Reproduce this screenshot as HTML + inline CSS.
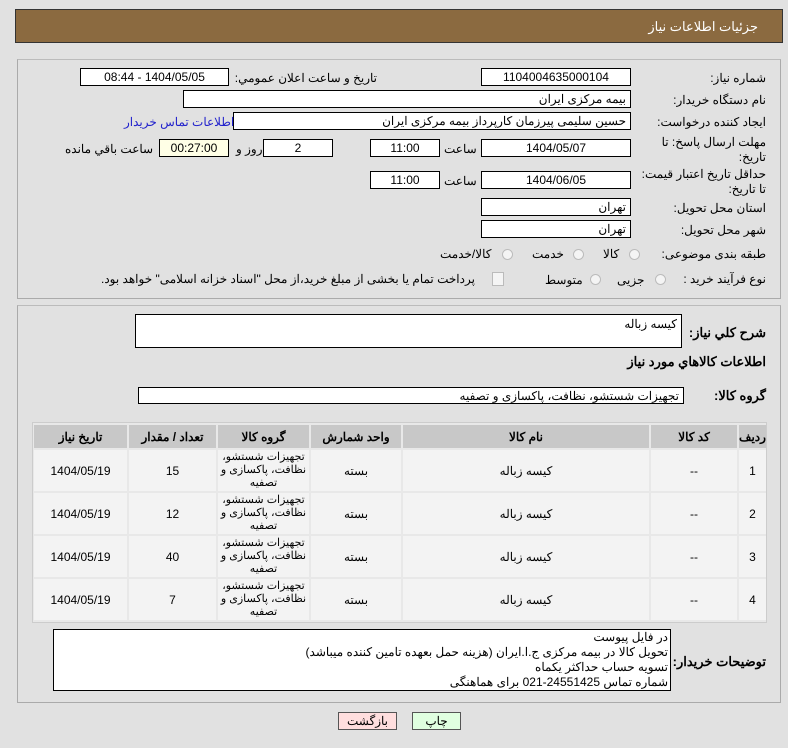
<!DOCTYPE html>
<html><head><meta charset="utf-8"><style>
body{margin:0;width:788px;height:748px;background:#e1e1e1;font-family:Tahoma,"Liberation Sans","Noto Sans CJK SC",sans-serif;font-size:12px;color:#000;position:relative;overflow:hidden;direction:rtl}
.a{position:absolute;white-space:nowrap}
.box{position:absolute;background:#fff;border:1px solid #000;box-sizing:border-box;font-size:12px;text-align:center;line-height:16px}
.r{text-align:right;padding-right:4px}
.lbl{position:absolute;white-space:nowrap;text-align:right}
.panel{position:absolute;left:17px;width:764px;border:1px solid #aaa;border-top-color:#bbb;box-sizing:border-box;background:#e1e1e1}
.rad{position:absolute;width:11px;height:11px;border-radius:50%;border:1px solid #bbb;background:#f4f4f4;box-sizing:border-box}
.cell{position:absolute;box-sizing:border-box;display:flex;align-items:center;justify-content:center;text-align:center;font-size:12px;line-height:14px;overflow:hidden}
.h{background:#c8c8c8;font-weight:bold;top:425px;height:23px}
.d{background:#f3f3f3;height:41px}
</style></head><body>
<div class="a" style="left:15px;top:9px;width:768px;height:34px;background:#8b6a40;border:1px solid #333;box-sizing:border-box"></div>
<div class="a" style="right:30px;top:19px;color:#fff;font-size:13px">جزئیات اطلاعات نیاز</div>

<div class="panel" style="top:59px;height:240px"></div>
<div class="lbl" style="right:22px;top:71px">شماره نیاز:</div>
<div class="box" style="left:481px;top:68px;width:150px;height:18px">1104004635000104</div>
<div class="lbl" style="right:411px;top:71px">تاریخ و ساعت اعلان عمومي:</div>
<div class="box" style="left:80px;top:68px;width:149px;height:18px">1404/05/05 - 08:44</div>

<div class="lbl" style="right:22px;top:93px">نام دستگاه خریدار:</div>
<div class="box r" style="left:183px;top:90px;width:448px;height:18px">بیمه مرکزی ایران</div>

<div class="lbl" style="right:22px;top:115px">ایجاد کننده درخواست:</div>
<div class="box r" style="left:233px;top:112px;width:398px;height:18px">حسین سلیمی پیرزمان کارپرداز بیمه مرکزی ایران</div>
<div class="lbl" style="left:124px;top:115px;color:#2222cc">اطلاعات تماس خریدار</div>

<div class="lbl" style="right:22px;top:135px;line-height:15px">مهلت ارسال پاسخ: تا<br>تاریخ:</div>
<div class="box" style="left:481px;top:139px;width:150px;height:18px">1404/05/07</div>
<div class="lbl" style="left:444px;top:142px">ساعت</div>
<div class="box" style="left:370px;top:139px;width:70px;height:18px">11:00</div>
<div class="box" style="left:263px;top:139px;width:70px;height:18px">2</div>
<div class="lbl" style="left:236px;top:142px">روز و</div>
<div class="box" style="left:159px;top:139px;width:70px;height:18px;background:#ffffe6">00:27:00</div>
<div class="lbl" style="left:65px;top:142px">ساعت باقي مانده</div>

<div class="lbl" style="right:22px;top:167px;line-height:15px">حداقل تاریخ اعتبار قیمت:<br>تا تاریخ:</div>
<div class="box" style="left:481px;top:171px;width:150px;height:18px">1404/06/05</div>
<div class="lbl" style="left:444px;top:174px">ساعت</div>
<div class="box" style="left:370px;top:171px;width:70px;height:18px">11:00</div>

<div class="lbl" style="right:22px;top:201px">استان محل تحویل:</div>
<div class="box r" style="left:481px;top:198px;width:150px;height:18px">تهران</div>
<div class="lbl" style="right:22px;top:223px">شهر محل تحویل:</div>
<div class="box r" style="left:481px;top:220px;width:150px;height:18px">تهران</div>

<div class="lbl" style="right:22px;top:247px">طبقه بندی موضوعی:</div>
<div class="rad" style="left:629px;top:249px"></div><div class="lbl" style="left:603px;top:247px">کالا</div>
<div class="rad" style="left:573px;top:249px"></div><div class="lbl" style="left:532px;top:247px">خدمت</div>
<div class="rad" style="left:502px;top:249px"></div><div class="lbl" style="left:440px;top:247px">کالا/خدمت</div>

<div class="lbl" style="right:22px;top:272px">نوع فرآیند خرید :</div>
<div class="rad" style="left:655px;top:274px"></div><div class="lbl" style="left:617px;top:273px">جزیی</div>
<div class="rad" style="left:590px;top:274px"></div><div class="lbl" style="left:545px;top:273px">متوسط</div>
<div class="a" style="left:492px;top:272px;width:10px;height:12px;border:1px solid #bbb;background:#f4f4f4"></div>
<div class="lbl" style="left:101px;top:272px">پرداخت تمام یا بخشی از مبلغ خرید،از محل "اسناد خزانه اسلامی" خواهد بود.</div>

<div class="panel" style="top:305px;height:398px"></div>
<div class="lbl" style="right:22px;top:325px;font-weight:bold;font-size:13px">شرح کلي نياز:</div>
<div class="box r" style="left:135px;top:314px;width:547px;height:34px;text-align:right;line-height:18px">کیسه زباله</div>
<div class="lbl" style="right:22px;top:354px;font-weight:bold;font-size:13px">اطلاعات کالاهاي مورد نياز</div>
<div class="lbl" style="right:22px;top:388px;font-weight:bold;font-size:13px">گروه کالا:</div>
<div class="box r" style="left:138px;top:387px;width:546px;height:17px">تجهیزات شستشو، نظافت، پاکسازی و تصفیه</div>

<div class="a" style="left:32px;top:422px;width:735px;height:201px;background:#e8e8e8;border:1px solid #ccc;box-sizing:border-box"></div>
<div class="cell h" style="left:739px;width:27px">ردیف</div>
<div class="cell h" style="left:651px;width:86px">کد کالا</div>
<div class="cell h" style="left:403px;width:246px">نام کالا</div>
<div class="cell h" style="left:311px;width:90px">واحد شمارش</div>
<div class="cell h" style="left:218px;width:91px">گروه کالا</div>
<div class="cell h" style="left:129px;width:87px">تعداد / مقدار</div>
<div class="cell h" style="left:34px;width:93px">تاریخ نیاز</div>

<div class="cell d" style="top:450px;left:739px;width:27px">1</div><div class="cell d" style="top:450px;left:651px;width:86px">--</div><div class="cell d" style="top:450px;left:403px;width:246px">کیسه زباله</div><div class="cell d" style="top:450px;left:311px;width:90px">بسته</div><div class="cell d" style="top:450px;left:218px;width:91px;font-size:11px;line-height:13px">تجهیزات شستشو،<br>نظافت، پاکسازی و<br>تصفیه</div><div class="cell d" style="top:450px;left:129px;width:87px">15</div><div class="cell d" style="top:450px;left:34px;width:93px">1404/05/19</div>

<div class="cell d" style="top:493px;left:739px;width:27px">2</div><div class="cell d" style="top:493px;left:651px;width:86px">--</div><div class="cell d" style="top:493px;left:403px;width:246px">کیسه زباله</div><div class="cell d" style="top:493px;left:311px;width:90px">بسته</div><div class="cell d" style="top:493px;left:218px;width:91px;font-size:11px;line-height:13px">تجهیزات شستشو،<br>نظافت، پاکسازی و<br>تصفیه</div><div class="cell d" style="top:493px;left:129px;width:87px">12</div><div class="cell d" style="top:493px;left:34px;width:93px">1404/05/19</div>

<div class="cell d" style="top:536px;left:739px;width:27px">3</div><div class="cell d" style="top:536px;left:651px;width:86px">--</div><div class="cell d" style="top:536px;left:403px;width:246px">کیسه زباله</div><div class="cell d" style="top:536px;left:311px;width:90px">بسته</div><div class="cell d" style="top:536px;left:218px;width:91px;font-size:11px;line-height:13px">تجهیزات شستشو،<br>نظافت، پاکسازی و<br>تصفیه</div><div class="cell d" style="top:536px;left:129px;width:87px">40</div><div class="cell d" style="top:536px;left:34px;width:93px">1404/05/19</div>

<div class="cell d" style="top:579px;left:739px;width:27px">4</div><div class="cell d" style="top:579px;left:651px;width:86px">--</div><div class="cell d" style="top:579px;left:403px;width:246px">کیسه زباله</div><div class="cell d" style="top:579px;left:311px;width:90px">بسته</div><div class="cell d" style="top:579px;left:218px;width:91px;font-size:11px;line-height:13px">تجهیزات شستشو،<br>نظافت، پاکسازی و<br>تصفیه</div><div class="cell d" style="top:579px;left:129px;width:87px">7</div><div class="cell d" style="top:579px;left:34px;width:93px">1404/05/19</div>

<div class="lbl" style="right:22px;top:654px;font-weight:bold;font-size:13px">توضیحات خریدار:</div>
<div class="box" style="left:53px;top:629px;width:618px;height:62px;text-align:right;padding-right:2px;line-height:15px">در فایل پیوست<br>تحویل کالا در بیمه مرکزی ج.ا.ایران (هزینه حمل بعهده تامین کننده میباشد)<br>تسویه حساب حداکثر یکماه<br>شماره تماس 24551425-021 برای هماهنگی</div>

<div class="box" style="left:338px;top:712px;width:59px;height:18px;background:#ffdede;border-color:#555">بازگشت</div>
<div class="box" style="left:412px;top:712px;width:49px;height:18px;background:#e0ffe0;border-color:#555">چاپ</div>
</body></html>
